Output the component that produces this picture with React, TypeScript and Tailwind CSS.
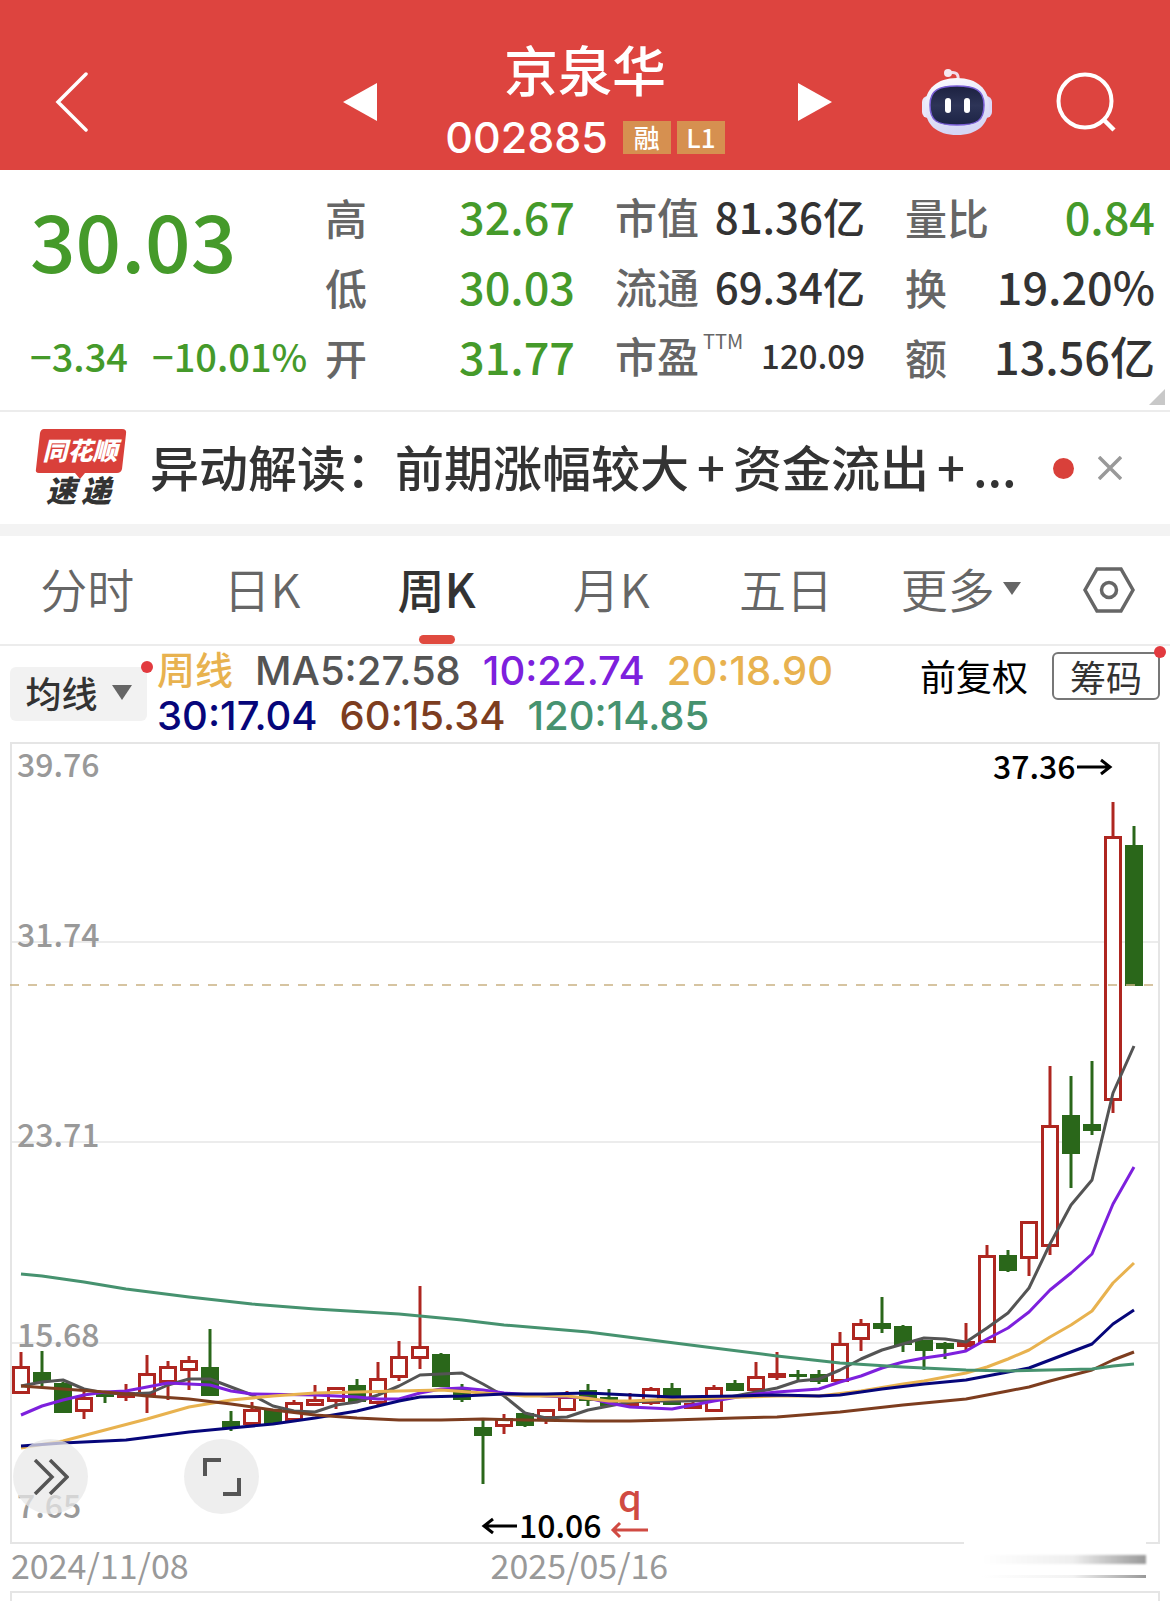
import { useState } from 'react'

type Candle = [kind: 'up' | 'down', high: number, top: number, bottom: number, low: number]

const STEP = 21
const UP = '#ae2620'
const DOWN = '#2a671a'

// One candle per week, one slot every STEP units
const candles: Candle[] = [
  ['up', 1352, 1366, 1394, 1394],
  ['down', 1351, 1372, 1382, 1386],
  ['down', 1382, 1383, 1413, 1413],
  ['up', 1392, 1397, 1412, 1419],
  ['down', 1392, 1394, 1397, 1403],
  ['up', 1384, 1392, 1398, 1401],
  ['up', 1355, 1373, 1396, 1413],
  ['up', 1361, 1366, 1383, 1400],
  ['up', 1356, 1360, 1371, 1390],
  ['down', 1329, 1367, 1396, 1396],
  ['down', 1411, 1421, 1428, 1431],
  ['up', 1402, 1409, 1425, 1425],
  ['down', 1409, 1409, 1424, 1424],
  ['up', 1400, 1402, 1421, 1421],
  ['up', 1385, 1399, 1406, 1406],
  ['up', 1387, 1387, 1402, 1409],
  ['down', 1379, 1385, 1402, 1402],
  ['up', 1362, 1378, 1404, 1406],
  ['up', 1341, 1356, 1378, 1381],
  ['up', 1286, 1346, 1359, 1369],
  ['down', 1353, 1354, 1387, 1387],
  ['down', 1384, 1388, 1400, 1402],
  ['down', 1420, 1427, 1436, 1484],
  ['up', 1414, 1418, 1427, 1434],
  ['down', 1413, 1413, 1426, 1427],
  ['up', 1409, 1409, 1419, 1424],
  ['up', 1391, 1396, 1411, 1411],
  ['down', 1384, 1390, 1401, 1406],
  ['down', 1389, 1397, 1406, 1406],
  ['up', 1393, 1402, 1406, 1406],
  ['up', 1387, 1388, 1404, 1405],
  ['down', 1383, 1388, 1405, 1405],
  ['up', 1398, 1403, 1409, 1409],
  ['up', 1385, 1387, 1412, 1412],
  ['down', 1380, 1383, 1391, 1391],
  ['up', 1362, 1376, 1391, 1392],
  ['up', 1352, 1373, 1378, 1380],
  ['down', 1370, 1374, 1377, 1380],
  ['down', 1370, 1374, 1382, 1384],
  ['up', 1332, 1343, 1382, 1382],
  ['up', 1319, 1323, 1340, 1351],
  ['down', 1297, 1323, 1329, 1333],
  ['down', 1325, 1326, 1345, 1352],
  ['down', 1340, 1340, 1351, 1370],
  ['down', 1342, 1343, 1349, 1359],
  ['up', 1323, 1341, 1347, 1350],
  ['up', 1245, 1255, 1343, 1343],
  ['down', 1250, 1255, 1271, 1272],
  ['up', 1221, 1221, 1259, 1276],
  ['up', 1066, 1125, 1247, 1255],
  ['down', 1076, 1115, 1154, 1188],
  ['down', 1061, 1124, 1131, 1135],
  ['up', 802, 836, 1101, 1113],
  ['down', 826, 845, 986, 986],
]

const lines = [
  {
    color: '#545454',
    points:
      '21,1386 42,1382 63,1380 84,1389 105,1393 126,1394 150,1393 168,1385 189,1379 210,1379 231,1387 252,1395 273,1406 294,1411 315,1412 336,1405 357,1402 378,1395 399,1386 420,1375 441,1374 462,1373 483,1384 504,1396 525,1413 546,1418 567,1417 588,1410 609,1406 630,1402 651,1401 693,1401 714,1400 735,1396 756,1392 777,1388 798,1381 819,1379 840,1370 861,1359 882,1350 903,1344 924,1338 945,1339 966,1342 987,1328 1008,1313 1029,1288 1050,1244 1071,1205 1092,1180 1113,1093 1134,1046',
  },
  {
    color: '#7d20dd',
    points:
      '21,1415 42,1406 63,1400 84,1395 105,1392 126,1391 147,1387 168,1383 189,1384 210,1385 231,1391 252,1394 315,1395 357,1397 378,1399 399,1399 420,1393 441,1389 462,1388 483,1390 504,1393 546,1396 588,1398 609,1403 630,1407 651,1408 672,1409 693,1405 714,1401 756,1394 777,1392 819,1389 840,1382 861,1376 882,1368 903,1362 924,1358 945,1355 966,1351 987,1339 1008,1328 1029,1312 1050,1290 1071,1273 1092,1254 1113,1204 1134,1167',
  },
  {
    color: '#e8b24f',
    points:
      '21,1448 63,1441 105,1430 147,1419 189,1407 231,1400 273,1396 315,1393 357,1392 399,1391 441,1390 483,1393 525,1396 567,1396 609,1401 630,1401 672,1399 714,1398 777,1396 819,1396 861,1391 903,1384 924,1381 966,1373 987,1367 1008,1359 1029,1350 1050,1337 1071,1325 1092,1311 1113,1283 1134,1263',
  },
  {
    color: '#06067a',
    points:
      '21,1446 63,1443 126,1440 189,1432 231,1428 273,1424 315,1418 357,1411 378,1406 399,1401 420,1397 462,1396 504,1394 546,1394 588,1393 630,1395 672,1397 735,1396 777,1395 819,1396 840,1395 882,1389 924,1384 966,1380 987,1376 1008,1372 1029,1368 1050,1360 1071,1352 1092,1344 1113,1324 1134,1310',
  },
  {
    color: '#7d3d1f',
    points:
      '21,1386 63,1389 105,1392 147,1396 189,1399 231,1404 273,1410 315,1415 357,1418 399,1420 441,1420 483,1419 525,1420 588,1421 630,1421 672,1420 735,1418 777,1417 840,1412 903,1405 966,1399 1008,1391 1029,1387 1050,1381 1092,1370 1113,1360 1134,1352',
  },
  {
    color: '#46926f',
    points:
      '21,1274 42,1276 84,1282 126,1289 189,1297 252,1304 315,1309 399,1314 462,1320 504,1325 588,1332 651,1340 714,1348 777,1356 840,1363 903,1367 966,1370 1008,1371 1092,1369 1113,1366 1134,1364',
  },
]

const priceLabels = [
  { y: 777, text: '39.76' },
  { y: 947, text: '31.74' },
  { y: 1147, text: '23.71' },
  { y: 1347, text: '15.68' },
  { y: 1518, text: '7.65' },
]

const tabs = ['分时', '日K', '周K', '月K', '五日']

function RobotIcon() {
  return (
    <svg viewBox="0 0 72 68" className="w-[72px] h-[68px]">
      <defs>
        <linearGradient id="shell" x1="0" y1="0" x2="0.3" y2="1">
          <stop offset="0" stopColor="#ffffff" />
          <stop offset="0.6" stopColor="#e3e3f8" />
          <stop offset="1" stopColor="#d5d6f5" />
        </linearGradient>
        <linearGradient id="visor" x1="0" y1="0" x2="0" y2="1">
          <stop offset="0" stopColor="#1c2140" />
          <stop offset="0.5" stopColor="#2d3457" />
          <stop offset="1" stopColor="#1c2345" />
        </linearGradient>
      </defs>
      <path d="M28 5 C35 3 38 6 37 13" fill="none" stroke="#f1dcea" strokeWidth="3" />
      <circle cx="27" cy="5" r="4" fill="#f6e8f1" />
      <rect x="1" y="28" width="14" height="22" rx="6" fill="#e9e7f9" />
      <rect x="57" y="28" width="14" height="22" rx="6" fill="#dcd8f8" />
      <path d="M36 10 C56 10 68 21 68 38 C68 57 56 67 36 67 C16 67 4 57 4 38 C4 21 16 10 36 10Z" fill="url(#shell)" />
      <path
        d="M36 18 C54 18 63 22 63 37 C63 53 56 57 36 57 C16 57 9 53 9 37 C9 22 18 18 36 18Z"
        fill="url(#visor)"
        stroke="#7a5fd6"
        strokeWidth="1.5"
      />
      <rect x="24" y="30" width="6" height="15" rx="3" fill="#fff" />
      <rect x="43" y="30" width="6" height="15" rx="3" fill="#fff" />
    </svg>
  )
}

function NewsLogo() {
  return (
    <svg viewBox="0 0 94 78" className="w-[94px] h-[78px] shrink-0 overflow-visible">
      <path d="M9 0 H87 Q92 0 91 5 L87 40 Q86 44 82 44 H50 L45 50 L40 44 H4 Q0 44 1 40 L5 4 Q6 0 9 0Z" fill="#d9403a" />
      <g className="italic font-black" textAnchor="middle">
        <text x="45" y="31" fontSize="25" fill="#fff">同花顺</text>
        <text x="26" y="73" fontSize="30" fill="#333">速</text>
        <text x="61" y="73" fontSize="30" fill="#333">递</text>
      </g>
    </svg>
  )
}

function Quote({ label, value, className }: { label: string; value: string; className: string }) {
  return (
    <div className="flex items-baseline justify-between h-[70px] leading-[72px] font-medium">
      <span className="text-[42px] text-[#666]">{label}</span>
      <span className={className}>{value}</span>
    </div>
  )
}

function Chart() {
  return (
    <svg viewBox="12 744 1146 798" className="block w-full overflow-visible">
      {[942, 1142, 1343].map((y) => (
        <line key={y} x1="12" x2="1158" y1={y} y2={y} stroke="#e6e6e6" strokeWidth="1.5" />
      ))}
      <g fontSize="32" fill="#999" className="font-medium">
        {priceLabels.map((l) => (
          <text key={l.text} x="17" y={l.y}>{l.text}</text>
        ))}
      </g>

      {candles.map(([kind, high, top, bottom, low], i) => {
        const x = STEP * (i + 1)
        const color = kind === 'up' ? UP : DOWN
        return (
          <g key={i} stroke={color} strokeWidth="3">
            {high < top && <line x1={x} x2={x} y1={high} y2={top} />}
            {low > bottom && <line x1={x} x2={x} y1={bottom} y2={low} />}
            {kind === 'up' ? (
              <rect x={x - 7.5} y={top + 1.5} width="15" height={bottom - top - 3} fill="#fff" />
            ) : (
              <rect x={x - 9} y={top} width="18" height={bottom - top} fill={DOWN} stroke="none" />
            )}
          </g>
        )
      })}

      {lines.map((l) => (
        <polyline key={l.color} points={l.points} fill="none" stroke={l.color} strokeWidth="3" strokeLinejoin="round" />
      ))}
      <line x1="10" x2="1155" y1="985" y2="985" stroke="#c9b183" strokeWidth="1.5" strokeDasharray="9 9" />

      <g fontSize="32" className="font-medium">
        <text x="993" y="779">37.36</text>
        <text x="519" y="1538">10.06</text>
      </g>
      <g fill="none" strokeWidth="3">
        <path d="M1077 767 H1110 M1101 760 L1110 767 L1101 774" stroke="#000" />
        <path d="M517 1526 H484 M493 1519 L484 1526 L493 1533" stroke="#000" />
        <path d="M648 1530 H613 M620 1523 L613 1530 L620 1537" stroke="#d04a42" />
      </g>
      <text x="618" y="1512" fontSize="38" fill="#d04a42" className="font-medium">q</text>
    </svg>
  )
}

export default function App() {
  const [active, setActive] = useState('周K')

  return (
    <div className="min-h-screen bg-white text-[#333] font-['Noto_Sans_CJK_SC',sans-serif] whitespace-nowrap overflow-hidden">
      {/* Header */}
      <header className="grid grid-cols-[1fr_auto_1fr] h-[170px] bg-[#dd443f] text-white">
        <div className="flex items-center justify-between pt-8 pl-[54px] pr-[68px]">
          <button aria-label="返回">
            <svg viewBox="0 0 36 60" className="w-9 h-[60px]">
              <path d="M32 2 L4 30 L32 58" fill="none" stroke="#fff" strokeWidth="3.5" strokeLinecap="round" />
            </svg>
          </button>
          <button aria-label="上一只">
            <svg viewBox="0 0 34 38" className="w-[34px] h-[38px]">
              <path d="M34 0 V38 L0 19Z" fill="#fff" />
            </svg>
          </button>
        </div>
        <div className="flex flex-col items-center pt-[35px]">
          <h1 className="text-[54px] leading-[68px] font-medium">京泉华</h1>
          <div className="flex items-center gap-[6px] h-[68px]">
            <span className="font-['Inter'] text-[43px] font-medium mr-[9px]">002885</span>
            <span className="w-12 h-[33px] leading-[31px] text-[26px] text-center bg-[#d69050] font-medium">融</span>
            <span className="w-12 h-[33px] leading-[31px] text-[26px] text-center bg-[#d69050] font-medium">L1</span>
          </div>
        </div>
        <div className="flex items-center pt-8 pl-[73px] pr-[54px]">
          <button aria-label="下一只">
            <svg viewBox="0 0 34 38" className="w-[34px] h-[38px]">
              <path d="M0 0 V38 L34 19Z" fill="#fff" />
            </svg>
          </button>
          <button aria-label="智能助手" className="ml-auto mr-[63px]">
            <RobotIcon />
          </button>
          <button aria-label="搜索">
            <svg viewBox="0 0 60 60" className="w-[60px] h-[60px]">
              <circle cx="29" cy="29" r="26.5" fill="none" stroke="#fff" strokeWidth="4" />
              <path d="M47 47 L58 58" stroke="#fff" strokeWidth="4.5" />
            </svg>
          </button>
        </div>
      </header>

      {/* Quote */}
      <section className="relative grid grid-cols-[255fr_250fr_250fr_250fr] gap-x-10 h-[242px] pl-[30px] pr-[15px] pt-[10px] border-b-2 border-[#ececec]">
        <div className="min-w-0 text-[#459a2a] font-medium">
          <div className="text-[80px] leading-[116px] h-[140px]">30.03</div>
          <div className="flex gap-6 text-[38px] leading-[72px]">
            <span>−3.34</span>
            <span>−10.01%</span>
          </div>
        </div>
        <div>
          <Quote label="高" value="32.67" className="text-[45px] text-[#459a2a]" />
          <Quote label="低" value="30.03" className="text-[45px] text-[#459a2a]" />
          <Quote label="开" value="31.77" className="text-[45px] text-[#459a2a]" />
        </div>
        <div>
          <Quote label="市值" value="81.36亿" className="text-[42px]" />
          <Quote label="流通" value="69.34亿" className="text-[42px]" />
          <div className="flex items-center justify-between h-[70px] leading-[74px] font-medium">
            <span className="text-[42px] text-[#666]">
              市盈<sup className="text-[20px] ml-1 -top-6 font-normal">TTM</sup>
            </span>
            <span className="text-[33px]">120.09</span>
          </div>
        </div>
        <div>
          <Quote label="量比" value="0.84" className="text-[45px] text-[#459a2a]" />
          <Quote label="换" value="19.20%" className="text-[45px]" />
          <Quote label="额" value="13.56亿" className="text-[45px]" />
        </div>
        <svg viewBox="0 0 16 16" className="absolute right-[5px] bottom-[5px] w-4 h-4">
          <path d="M16 0 V16 H0Z" fill="#c8c8c8" />
        </svg>
      </section>

      {/* News */}
      <section className="flex items-center h-[124px] pl-[35px] pr-[48px] border-b-12 border-[#f3f3f3]">
        <NewsLogo />
        <p className="ml-[21px] pb-1 text-[49px] font-medium">
          异动解读：前期涨幅较大<span className="mx-2">+</span>资金流出<span className="mx-2">+</span>...
        </p>
        <span className="w-[21px] h-[21px] ml-auto rounded-full bg-[#d9403a]" />
        <button aria-label="关闭" className="ml-6">
          <svg viewBox="0 0 24 24" className="w-6 h-6">
            <path d="M1 1 L23 23 M23 1 L1 23" stroke="#999" strokeWidth="3.5" />
          </svg>
        </button>
      </section>

      {/* Period tabs */}
      <nav className="flex h-[110px] border-b-2 border-[#ececec] text-[47px] leading-[102px]">
        {tabs.map((t) => (
          <button
            key={t}
            onClick={() => setActive(t)}
            className={`relative flex-1 pb-1 ${t === active ? 'font-medium text-[#333]' : 'font-[350] text-[#666]'}`}
          >
            {t}
            {t === active && (
              <span className="absolute left-1/2 bottom-0 w-9 h-[9px] -translate-x-1/2 rounded-full bg-[#e04a3f]" />
            )}
          </button>
        ))}
        <button className="flex flex-1 items-center justify-center gap-2 pb-1 font-[350] text-[#666]">
          更多
          <svg viewBox="0 0 18 13" className="w-[18px] h-[13px]">
            <path d="M0 0 H18 L9 13Z" fill="#666" />
          </svg>
        </button>
        <button aria-label="设置" className="flex items-center justify-center w-[122px]">
          <svg viewBox="0 0 52 46" className="w-[52px] h-[46px]" fill="none" stroke="#666" strokeWidth="3.5">
            <path d="M14 2 H38 L50 23 L38 44 H14 L2 23Z" />
            <circle cx="26" cy="23" r="7.5" />
          </svg>
        </button>
      </nav>

      {/* Moving averages */}
      <section className="flex items-start h-24 px-[10px]">
        <button className="relative flex items-center justify-center gap-[14px] w-[137px] h-[54px] mt-[21px] pb-1 rounded-md bg-[#f2f2f2] text-[36px] font-medium">
          均线
          <svg viewBox="0 0 20 15" className="w-5 h-[15px]">
            <path d="M0 0 H20 L10 15Z" fill="#666" />
          </svg>
          <span className="absolute -right-[6px] -top-[6px] w-3 h-3 rounded-full bg-[#e23a3f]" />
        </button>
        <div className="ml-[10px] pt-[2px] font-['Inter','Noto_Sans_CJK_SC',sans-serif] text-[40px] leading-[45px] font-medium">
          <div className="flex gap-[22px]">
            <span className="text-[38px] text-[#e8b24f]">周线</span>
            <span className="text-[#545454]">MA5:27.58</span>
            <span className="text-[#7d20dd]">10:22.74</span>
            <span className="text-[#e8b24f]">20:18.90</span>
          </div>
          <div className="flex gap-[22px]">
            <span className="text-[#06067a]">30:17.04</span>
            <span className="text-[#7d3d1f]">60:15.34</span>
            <span className="text-[#46926f]">120:14.85</span>
          </div>
        </div>
        <button className="ml-auto mt-[5px] text-[36px] leading-[48px] text-black">前复权</button>
        <button className="relative w-[108px] h-12 ml-6 mt-[6px] rounded-md border-2 border-[#777] text-[36px] leading-[42px]">
          筹码
          <span className="absolute -right-2 -top-2 w-3 h-3 rounded-full bg-[#e23a3f]" />
        </button>
      </section>

      {/* Chart */}
      <main className="px-[10px]">
        <div className="relative border-2 border-[#e5e5e5]">
          <Chart />
          <button
            aria-label="展开"
            className="absolute left-[1px] bottom-7 flex items-center justify-center w-[75px] h-[75px] rounded-full bg-[#e8e8e8]/75"
          >
            <svg viewBox="0 0 36 36" className="w-9 h-9" fill="none" stroke="#555" strokeWidth="3.5">
              <path d="M2 1 L19 18 L2 35 M17 1 L34 18 L17 35" />
            </svg>
          </button>
          <button
            aria-label="全屏"
            className="absolute left-[172px] bottom-7 flex items-center justify-center w-[75px] h-[75px] rounded-full bg-[#e8e8e8]/75"
          >
            <svg viewBox="0 0 38 38" className="w-[38px] h-[38px]" fill="none" stroke="#555" strokeWidth="4">
              <path d="M18 2 H2 V18 M20 36 H36 V20" />
            </svg>
          </button>
        </div>
        <div className="relative grid grid-cols-[480fr_670fr] h-[47px] pl-px text-[34px] leading-[42px] text-[#999]">
          <span>2024/11/08</span>
          <span>2025/05/16</span>
          <div className="absolute right-[14px] -top-[3px] w-[182px] h-[38px] pt-[14px] bg-white">
            <div className="h-[9px] bg-linear-to-r from-white from-10% via-[#eeeeee] via-60% to-[#999] blur-[1px]" />
            <div className="h-[3px] mt-[11px] bg-linear-to-r from-white from-10% via-[#f2f2f2] via-60% to-[#999]" />
          </div>
        </div>
        <div className="h-[10px] border-2 border-b-0 border-[#e5e5e5]" />
      </main>
    </div>
  )
}
